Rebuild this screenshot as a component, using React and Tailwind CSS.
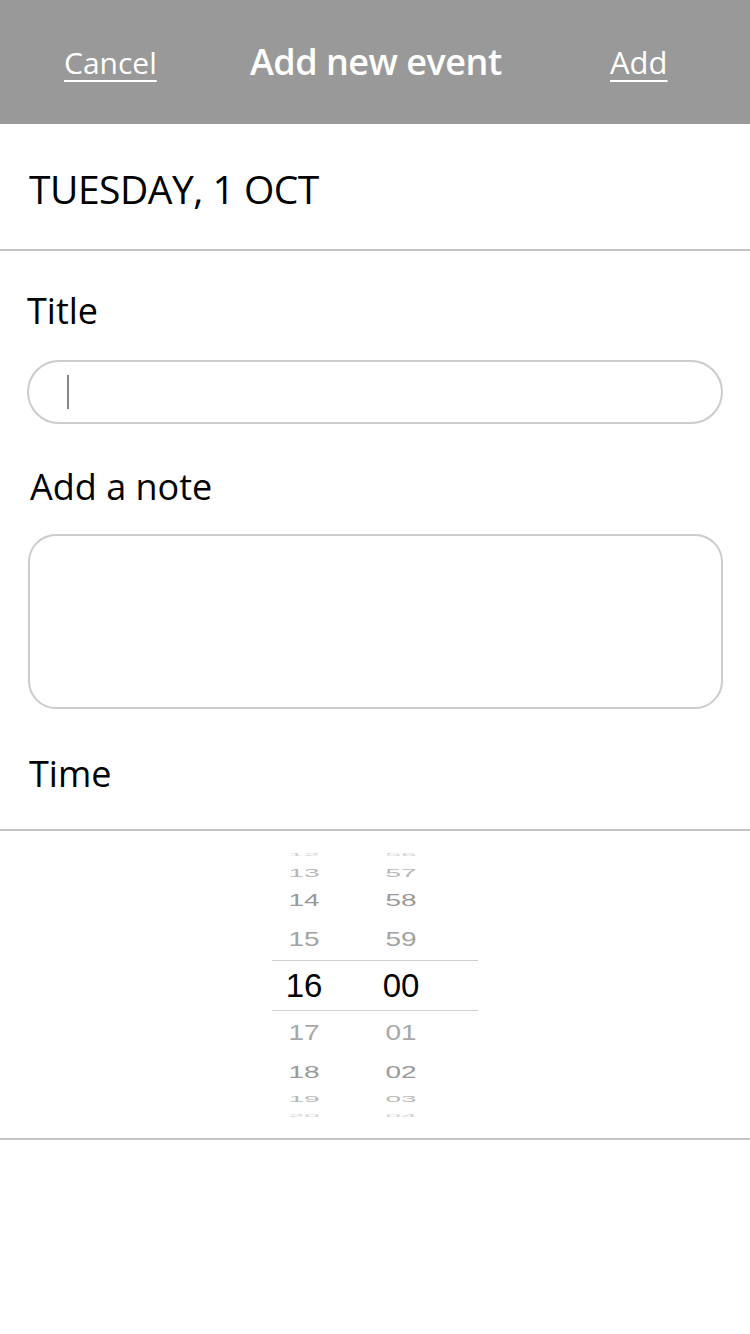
const hours = [
  { h: '12', m: '56', height: 'h-[14px]', scale: 'scale-y-[0.15]', color: 'text-[#d0d0d0]' },
  { h: '13', m: '57', height: 'h-[22px]', scale: 'scale-y-[0.42]', color: 'text-[#b8b8b8]' },
  { h: '14', m: '58', height: 'h-[34px]', scale: 'scale-y-[0.6]', color: 'text-[#999]' },
  { h: '15', m: '59', height: 'h-[42px]', scale: 'scale-y-[0.75]', color: 'text-[#a3a3a3]' },
  { h: '16', m: '00', height: 'h-[51px]', scale: '', color: 'text-black', active: true },
  { h: '17', m: '01', height: 'h-[44px]', scale: 'scale-y-[0.8]', color: 'text-[#a8a8a8]' },
  { h: '18', m: '02', height: 'h-[34px]', scale: 'scale-y-[0.62]', color: 'text-[#999]' },
  { h: '19', m: '03', height: 'h-[20px]', scale: 'scale-y-[0.34]', color: 'text-[#b8b8b8]' },
  { h: '20', m: '04', height: 'h-[14px]', scale: 'scale-y-[0.14]', color: 'text-[#d0d0d0]' },
]

function TimeWheel() {
  return (
    <div className="flex justify-center border-b-2 border-[#c4c4c4] pt-[17px] pb-[15px]">
      <div className="flex w-[206px] flex-col font-['Liberation_Sans',Arial,sans-serif]">
        {hours.map((r) => (
          <div
            key={r.h}
            className={`flex items-center ${r.height} ${r.active ? 'border-y border-[#d0d0d0] text-[33px]' : 'text-[28px]'} ${r.color}`}
          >
            <span className={`w-[64px] text-center leading-none ${r.scale}`}>{r.h}</span>
            <span className={`ml-[33px] w-[64px] text-center leading-none ${r.scale}`}>{r.m}</span>
          </div>
        ))}
      </div>
    </div>
  )
}

export default function App() {
  return (
    <div className="min-h-[1334px] w-[750px] bg-white font-['Open_Sans',sans-serif] text-black">
      {/* barra superior */}
      <div className="grid h-[124px] grid-cols-3 items-center bg-[#999999] text-white">
        <span className="pl-[64px] text-[30px] underline decoration-[2px] underline-offset-[6px]">Cancel</span>
        <span className="whitespace-nowrap text-center text-[36px] font-semibold tracking-[-0.5px]">Add new event</span>
        <span className="pl-[110px] text-[31px] underline decoration-[2px] underline-offset-[6px]">Add</span>
      </div>

      <div className="flex h-[127px] items-center border-b-2 border-[#c4c4c4] pl-[29px] pt-[3px]">
        <h1 className="text-[39px] leading-none tracking-[-0.5px]">TUESDAY, 1 OCT</h1>
      </div>

      <div className="px-[27px]">
        <p className="mt-[42px] text-[36px] leading-none">Title</p>
        <div className="mt-[31px] flex h-[64px] items-center rounded-full border-2 border-[#cccccc] pl-[38px]">
          <span className="h-[34px] w-[2px] bg-[#888]" />
        </div>

        <p className="ml-[3px] mt-[45px] text-[36px] leading-none">Add a note</p>
        <div className="ml-[1px] mt-[29px] h-[175px] rounded-[28px] border-2 border-[#cccccc]" />

        <p className="ml-[2px] mt-[47px] text-[36px] leading-none">Time</p>
      </div>

      <div className="mt-[37px] border-b-2 border-[#c4c4c4]" />
      <TimeWheel />
    </div>
  )
}
